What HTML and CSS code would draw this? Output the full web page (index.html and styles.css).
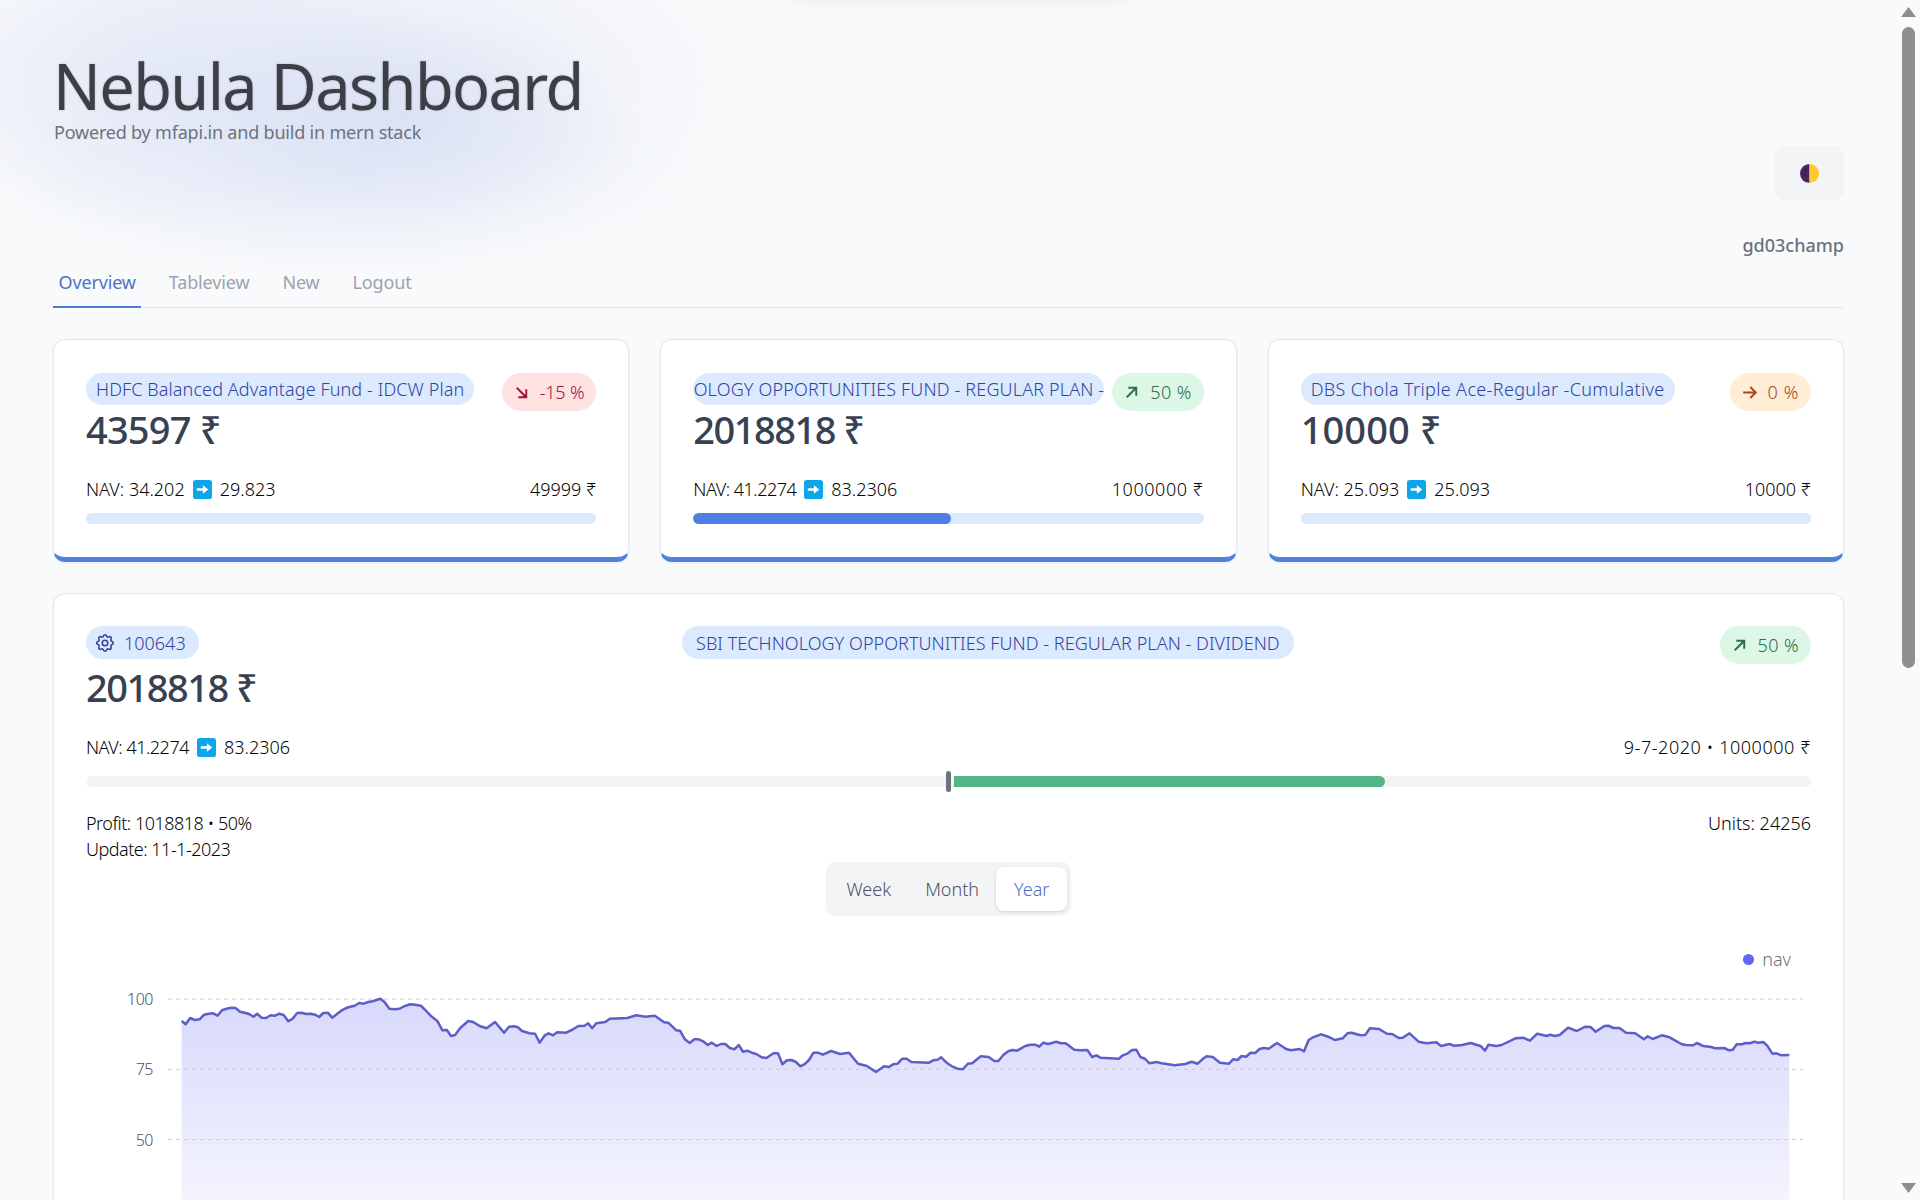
FILE: index.html
```html
<!DOCTYPE html>
<html lang="en">
<head>
<meta charset="utf-8">
<title>Nebula Dashboard</title>
<link rel="stylesheet" href="styles.css">
</head>
<body>
<div class="page">
  <div class="nebula"></div>
  <div class="top-glow"></div>
  <header class="header">
    <div class="brand">
      <h1 class="title">Nebula Dashboard</h1>
      <p class="subtitle">Powered by mfapi.in and build in mern stack</p>
    </div>
    <div class="account">
      <button class="theme-btn" type="button" aria-label="Toggle theme">
        <svg class="theme-icon" viewBox="0 0 20 20"><path d="M10 0a10 10 0 0 0 0 20z" fill="#43265f"/><path d="M10 0a10 10 0 0 1 0 20z" fill="#fdc92f"/><circle cx="6" cy="6" r="1.2" fill="#2f1848"/><circle cx="4.5" cy="12" r="1" fill="#2f1848"/><circle cx="14" cy="5" r=".8" fill="#eeb31b"/></svg>
      </button>
      <div class="username">gd03champ</div>
    </div>
  </header>
  <nav class="tabs">
    <a class="tab tab-active">Overview</a>
    <a class="tab">Tableview</a>
    <a class="tab">New</a>
    <a class="tab">Logout</a>
  </nav>

  <section class="cards">
    <article class="card">
      <div class="card-head">
        <div class="pill name-pill"><span class="pill-text">HDFC Balanced Advantage Fund - IDCW Plan</span></div>
        <div class="delta delta-down">
          <svg class="delta-icon" viewBox="0 0 24 24"><path d="M6 6l12 12M18 8v10H8"/></svg>
          <span>-15 %</span>
        </div>
      </div>
      <div class="metric metric-mid">43597 ₹</div>
      <div class="row nav-row">
        <div class="nav-value"><span>NAV: 34.202</span><svg class="arrow-box" viewBox="0 0 20 20"><rect width="20" height="20" rx="3"/><path d="M4 8.600h6.400V5.600L16 10l-5.600 4.400v-3H4z"/></svg><span>29.823</span></div>
        <span>49999 ₹</span>
      </div>
      <div class="progress"><div class="progress-fill fill-0"></div></div>
    </article>

    <article class="card">
      <div class="card-head">
        <div class="pill name-pill name-clipped"><span class="pill-text clip-text">OLOGY OPPORTUNITIES FUND - REGULAR PLAN -</span></div>
        <div class="delta delta-up">
          <svg class="delta-icon" viewBox="0 0 24 24"><path d="M6 18L18 6M8 6h10v10"/></svg>
          <span>50 %</span>
        </div>
      </div>
      <div class="metric">2018818 ₹</div>
      <div class="row nav-row">
        <div class="nav-value"><span class="nav-tight">NAV: 41.2274</span><svg class="arrow-box" viewBox="0 0 20 20"><rect width="20" height="20" rx="3"/><path d="M4 8.600h6.400V5.600L16 10l-5.600 4.400v-3H4z"/></svg><span>83.2306</span></div>
        <span class="total-wide">1000000 ₹</span>
      </div>
      <div class="progress"><div class="progress-fill fill-50"></div></div>
    </article>

    <article class="card">
      <div class="card-head">
        <div class="pill name-pill"><span class="pill-text name-wide">DBS Chola Triple Ace-Regular -Cumulative</span></div>
        <div class="delta delta-flat">
          <svg class="delta-icon" viewBox="0 0 24 24"><path d="M4 12h16M13 5l7 7-7 7"/></svg>
          <span>0 %</span>
        </div>
      </div>
      <div class="metric metric-wide">10000 ₹</div>
      <div class="row nav-row">
        <div class="nav-value"><span>NAV: 25.093</span><svg class="arrow-box" viewBox="0 0 20 20"><rect width="20" height="20" rx="3"/><path d="M4 8.600h6.400V5.600L16 10l-5.600 4.400v-3H4z"/></svg><span>25.093</span></div>
        <span>10000 ₹</span>
      </div>
      <div class="progress"><div class="progress-fill fill-0"></div></div>
    </article>
  </section>

  <section class="detail">
    <div class="detail-head">
      <div class="pill id-pill">
        <svg class="gear" viewBox="0 0 24 24"><path d="M10.325 4.317c.426-1.756 2.924-1.756 3.35 0a1.724 1.724 0 002.573 1.066c1.543-.94 3.31.826 2.37 2.37a1.724 1.724 0 001.065 2.572c1.756.426 1.756 2.924 0 3.35a1.724 1.724 0 00-1.066 2.573c.94 1.543-.826 3.31-2.37 2.37a1.724 1.724 0 00-2.572 1.065c-.426 1.756-2.924 1.756-3.35 0a1.724 1.724 0 00-2.573-1.066c-1.543.94-3.31-.826-2.37-2.37a1.724 1.724 0 00-1.065-2.572c-1.756-.426-1.756-2.924 0-3.35a1.724 1.724 0 001.066-2.573c-.94-1.543.826-3.31 2.37-2.37.996.608 2.296.07 2.572-1.065z"/><circle cx="12" cy="12" r="3"/></svg>
        <span>100643</span>
      </div>
      <div class="pill fund-pill">SBI TECHNOLOGY OPPORTUNITIES FUND - REGULAR PLAN - DIVIDEND</div>
      <div class="delta delta-up detail-delta">
        <svg class="delta-icon" viewBox="0 0 24 24"><path d="M6 18L18 6M8 6h10v10"/></svg>
        <span>50 %</span>
      </div>
    </div>
    <div class="metric detail-metric">2018818 ₹</div>
    <div class="row nav-row detail-nav">
      <div class="nav-value"><span class="nav-tight">NAV: 41.2274</span><svg class="arrow-box" viewBox="0 0 20 20"><rect width="20" height="20" rx="3"/><path d="M4 8.600h6.400V5.600L16 10l-5.600 4.400v-3H4z"/></svg><span>83.2306</span></div>
      <span class="total-wide">9-7-2020 • 1000000 ₹</span>
    </div>
    <div class="delta-bar">
      <div class="delta-half delta-half-left"></div>
      <div class="delta-marker"></div>
      <div class="delta-half"><div class="delta-gain"></div></div>
    </div>
    <div class="row stats">
      <div class="stats-left">
        <div>Profit: 1018818 • 50%</div>
        <div>Update: 11-1-2023</div>
      </div>
      <div>Units: 24256</div>
    </div>
    <div class="range-wrap">
      <div class="range">
        <span class="range-item">Week</span>
        <span class="range-item">Month</span>
        <span class="range-item range-active">Year</span>
      </div>
    </div>
    <div class="legend"><span class="legend-dot"></span><span>nav</span></div>
    <div class="chart">
      <svg class="chart-svg" id="navChart" viewBox="0 0 1726 340" xmlns="http://www.w3.org/2000/svg"></svg>
    </div>
  </section>
</div>
<div class="scrollbar" aria-hidden="true">
  <span class="scroll-up"></span>
  <span class="scroll-thumb"></span>
  <span class="scroll-down"></span>
</div>
<script src="chart.js"></script>
</body>
</html>
```
FILE: styles.css
```css
* { box-sizing: border-box; }
html, body { height: 100%; }
html { background: #f9fafb; overflow: hidden; }
body { margin: 0; font-family: "Noto Sans", "Open Sans", sans-serif; font-weight: 300; color: #050505; background: #f9fafb; font-size: 18px; overflow: hidden; }
.page { position: relative; height: 1200px; padding: 0 76px 0 53px; overflow: hidden; }
.scrollbar { position: fixed; top: 0; right: 0; bottom: 0; width: 20px; padding: 7px 4px 7px 1px; display: flex; flex-direction: column; align-items: center; }
.scroll-up, .scroll-down { width: 15px; height: 10px; background: #8f8f8f; flex: none; }
.scroll-up { clip-path: polygon(50% 0, 100% 100%, 0 100%); }
.scroll-down { clip-path: polygon(0 0, 100% 0, 50% 100%); margin-top: auto; }
.scroll-thumb { width: 13px; height: 641px; margin-top: 10px; background: #8f8f8f; border-radius: 7px; }
.nebula { position: absolute; left: 0; top: 0; width: 720px; height: 300px; background:
  radial-gradient(ellipse 230px 110px at 400px 120px, rgba(216,223,243,.75), rgba(216,223,243,0)),
  radial-gradient(ellipse 280px 150px at 180px 85px, rgba(224,230,246,.8), rgba(224,230,246,0)),
  radial-gradient(ellipse 420px 190px at 340px 85px, rgba(227,232,247,.9), rgba(227,232,247,0)),
  radial-gradient(ellipse 340px 110px at 350px 170px, rgba(234,238,249,.85), rgba(234,238,249,0)); }
.top-glow { position: absolute; left: 793px; top: -8px; width: 334px; height: 6px; box-shadow: 0 0 12px rgba(0,0,0,.14); border-radius: 12px; }
.header { position: relative; display: flex; justify-content: space-between; align-items: flex-start; height: 262px; }
.title { margin: 52px 0 0; font-size: 63px; line-height: 68px; font-weight: 400; color: #3c3f45; letter-spacing: -1.6px; text-shadow: 0 0 2px rgba(55,65,81,.35); }
.subtitle { margin: 0; padding-left: 1px; font-size: 18px; line-height: 24px; color: #6b7280; font-weight: 400; letter-spacing: -.2px; }
.account { display: flex; flex-direction: column; align-items: flex-end; padding-top: 146px; }
.theme-btn { width: 70px; height: 54px; border: 0; border-radius: 10px; background: #f3f4f6; display: flex; align-items: center; justify-content: center; padding: 0; }
.theme-icon { width: 19px; height: 19px; }
.username { margin-top: 33px; font-size: 18px; line-height: 24px; font-weight: 500; color: #6b7280; }
.tabs { position: relative; display: flex; gap: 22px; height: 46px; border-bottom: 1px solid #e5e7eb; }
.tab { padding: 0 5.500px; height: 46px; line-height: 40px; font-size: 18px; color: #9ca3af; font-weight: 400; letter-spacing: -.15px; }
.tab-active { color: #4f71c5; border-bottom: 2px solid #4f7bd9; }
.cards { position: relative; display: grid; grid-template-columns: repeat(3, 1fr); gap: 31px; margin-top: 31px; }
.card { background: #fff; border: 1px solid #e5e7eb; border-bottom: 5px solid #5181e0; border-radius: 12px; box-shadow: 0 1px 3px rgba(0,0,0,.06); padding: 33px 32px 0; height: 223px; }
.card-head { display: flex; justify-content: space-between; align-items: flex-start; gap: 6px; height: 35px; }
.pill { display: inline-flex; align-items: center; background: #dbeafe; color: #33439d; border-radius: 17px; font-size: 18px; font-weight: 300; white-space: nowrap; letter-spacing: .1px; }
.name-pill { height: 32px; padding: 0 10px; flex: 0 1 auto; min-width: 0; overflow: hidden; }
.name-wide { letter-spacing: .36px; }
.name-clipped { padding: 0; width: 411px; flex: none; justify-content: flex-end; }
.clip-text { overflow: hidden; letter-spacing: .15px; }
.delta { display: inline-flex; align-items: center; gap: 9px; height: 38px; padding: 0 12px 0 10px; border-radius: 19px; font-size: 18px; flex: none; letter-spacing: -.2px; }
.delta-icon { width: 19px; height: 19px; fill: none; stroke: currentColor; stroke-width: 2.400; }
.delta-down { background: #fee2e2; color: #9f1239; }
.delta-up { background: #dcf7e6; color: #2f6b4f; letter-spacing: .4px; }
.delta-flat { background: #ffedd5; color: #a8481f; letter-spacing: .6px; }
.metric { font-size: 38px; line-height: 42px; font-weight: 500; color: #374151; letter-spacing: -1.500px; }
.metric-mid { letter-spacing: -.8px; }
.metric-wide { letter-spacing: .1px; }
.row { display: flex; justify-content: space-between; align-items: center; }
.nav-row { margin-top: 26px; height: 26px; }
.nav-value { display: flex; align-items: center; gap: 8px; }
.nav-tight { letter-spacing: -.5px; }
.total-wide { letter-spacing: .55px; }
.arrow-box { width: 19px; height: 19px; }
.arrow-box rect { fill: #0ea5e9; }
.arrow-box path { fill: #fff; }
.progress { height: 11px; margin-top: 11px; background: #dbeafe; border-radius: 6px; overflow: hidden; }
.progress-fill { height: 100%; background: #4f7fe3; border-radius: 6px; }
.fill-0 { width: 0; }
.fill-50 { width: 50.500%; }
.detail { position: relative; background: #fff; border: 1px solid #e5e7eb; border-radius: 12px; box-shadow: 0 1px 3px rgba(0,0,0,.06); padding: 32px; margin-top: 31px; height: 800px; }
.detail-head { position: relative; display: flex; justify-content: space-between; align-items: flex-start; }
.id-pill { height: 33px; padding: 0 13px 0 8px; gap: 8px; letter-spacing: 0; }
.gear { width: 22px; height: 22px; fill: none; stroke: currentColor; stroke-width: 1.700; }
.fund-pill { position: absolute; left: 596px; top: 0; height: 33px; padding: 0 14px; letter-spacing: .05px; }
.detail-metric { margin-top: 2px; }
.detail-nav { margin-top: 26px; }
.delta-bar { position: relative; display: flex; align-items: center; margin-top: 16px; height: 11px; background: #f3f4f6; border-radius: 6px; }
.delta-half { flex: 1; height: 11px; }
.delta-half-left { flex: none; width: 860px; }
.delta-marker { width: 5px; height: 21px; margin-right: 3px; background: #6b7280; border-radius: 3px; flex: none; }
.delta-gain { width: 50.300%; height: 11px; background: #54b688; border-radius: 0 6px 6px 0; }
.stats { align-items: flex-start; margin-top: 23px; line-height: 26px; }
.stats-left { letter-spacing: -.5px; }
.range-wrap { display: flex; justify-content: center; }
.range { display: flex; align-items: center; height: 54px; padding: 0 4px; background: #f3f4f6; border-radius: 9px; }
.range-item { padding: 0 17px; line-height: 44px; color: #4b5563; }
.range-active { padding: 0 18px; background: #fff; color: #4f71c5; border-radius: 8px; box-shadow: 0 1px 3px rgba(0,0,0,.15); }
.legend { display: flex; justify-content: flex-end; align-items: center; gap: 8px; margin-top: 30px; padding-right: 20px; height: 26px; color: #6b7280; }
.legend-dot { width: 11px; height: 11px; background: #6366f1; border-radius: 50%; }
.chart { height: 340px; }
.chart-svg { display: block; width: 1726px; height: 340px; overflow: visible; }
.grid-line { stroke: #c9cbd1; stroke-width: 1; stroke-dasharray: 4 4; }
.axis-label { font-family: "Noto Sans", sans-serif; font-size: 16px; font-weight: 300; fill: #4b5563; text-anchor: end; letter-spacing: -.5px; }
.nav-line { fill: none; stroke: #5b5fc7; stroke-width: 2.500; stroke-linejoin: round; }
```
FILE: chart.js
```js
// NAV history, in screen-scale samples grouped per stretch of the chart.
var segments = [
  { ox: 60, oy: 930, sx: 2.45, sy: 3, pts: [298,273,308,283,319,264,330,270,342,268,353,254,364,251,375,250,386,257,397,241,408,236,419,233,430,234,441,245,452,248,463,252,474,260,483,251,494,263,505,264,516,256,527,257,537,251,548,255,559,274,570,266,581,249,592,248,603,252,614,251,625,254,635,261,645,249,656,248,667,263,678,253,689,242,700,235,711,230,722,227,733,219,744,221,755,216,766,214,785,206,795,216,807,236,820,238,832,236,845,228,858,223,870,224,884,227,895,240,908,257,925,274,937,301,948,300,958,318,968,315,980,295,1000,273,1012,276,1028,288,1045,295,1066,276,1088,308,1100,290,1112,289,1122,292,1132,303,1150,310,1164,311,1175,338,1187,317,1197,310,1208,316,1218,307,1240,308,1254,300,1270,288,1285,287,1294,280,1304,295,1314,280,1336,276,1347,266,1390,264,1412,256,1435,260,1457,257,1480,277,1490,278,1510,301] },
  { ox: 680, oy: 930, sx: 2.45, sy: 3, pts: [0,302,12,328,24,339,35,328,46,328,58,335,68,345,78,338,90,348,100,342,111,342,122,354,133,358,144,345,154,365,165,362,176,368,187,372,200,382,212,384,229,370,240,370,251,403,262,391,273,390,284,396,295,409,307,401,316,390,327,368,338,368,350,374,370,363,392,372,414,368,436,401,458,408,480,426,500,409,512,411,522,403,533,401,545,386,555,386,567,396,610,398,620,391,631,389,640,382,655,400,668,410,680,416,693,418,705,401,716,400,737,379,756,381,770,393,780,393,792,375,804,364,815,360,826,362,846,348,858,344,870,344,880,350,890,338,902,342,922,335,933,340,945,340,966,359,980,361,998,360,1010,381,1020,376,1030,383,1075,386,1085,376,1097,370,1108,360,1118,359,1128,381,1140,387,1150,400,1168,396,1180,400,1212,406,1238,402,1254,395,1268,401,1280,388,1290,379,1305,381,1323,398,1345,401,1355,388,1366,390,1376,378,1387,380,1398,368,1409,369,1420,357,1430,354,1442,356,1463,339,1485,357,1497,361,1518,357] },
  { ox: 1300, oy: 900, sx: 2.53, sy: 3, pts: [10,454,22,420,33,412,53,403,75,412,88,420,108,415,120,400,130,398,153,406,165,405,177,385,200,387,220,401,233,402,250,414,260,413,277,400,300,425,320,430,345,427,357,438,378,432,390,437,410,435,432,429,458,439,468,452,477,434,497,438,510,435,545,415,565,413,582,422,600,401,625,408,633,404,645,408,657,405,678,383,700,393,722,380,735,381,748,395,770,378,780,377,793,384,808,384,825,398,848,400,870,418,880,409,892,417,915,406,935,412,965,432,975,435,995,436,1004,429,1020,438,1040,441,1050,445,1073,444,1085,451,1095,449,1105,433,1118,433,1128,429,1138,430,1150,425,1160,428,1172,426,1182,437,1195,461,1205,460,1218,466,1238,465] }
];

var ticks = [[100, 999], [75, 1069.3], [50, 1139.6]];
var NS = 'http://www.w3.org/2000/svg';
var svg = document.getElementById('navChart');

function el(name, attrs, text) {
  var node = document.createElementNS(NS, name);
  for (var k in attrs) node.setAttribute(k, attrs[k]);
  if (text !== undefined) node.textContent = text;
  return node;
}

var box = svg.getBoundingClientRect();
var originX = box.left;
var originY = box.top;

var points = [];
segments.forEach(function (s) {
  for (var i = 0; i < s.pts.length; i += 2) {
    points.push([(s.ox + s.pts[i] / s.sx - originX).toFixed(1), (s.oy + s.pts[i + 1] / s.sy - originY).toFixed(1)]);
  }
});
var line = points.map(function (p) { return p.join(' '); }).join(' L');
var zeroY = 1280 - originY;

var defs = el('defs', {});
var grad = el('linearGradient', { id: 'navFill', x1: 0, y1: 0, x2: 0, y2: 1 });
grad.appendChild(el('stop', { offset: '0%', 'stop-color': '#6366f1', 'stop-opacity': 0.25 }));
grad.appendChild(el('stop', { offset: '100%', 'stop-color': '#6366f1', 'stop-opacity': 0 }));
defs.appendChild(grad);
svg.appendChild(defs);

svg.appendChild(el('path', { d: 'M' + line + ' L' + points[points.length - 1][0] + ' ' + zeroY + ' L' + points[0][0] + ' ' + zeroY + ' Z', fill: 'url(#navFill)' }));

ticks.forEach(function (t) {
  var y = t[1] - originY;
  svg.appendChild(el('line', { x1: 168 - originX, x2: 1803 - originX, y1: y, y2: y, 'class': 'grid-line' }));
  svg.appendChild(el('text', { x: 153 - originX, y: y + 6, 'class': 'axis-label' }, t[0]));
});
svg.appendChild(el('path', { d: 'M' + line, 'class': 'nav-line' }));
```
